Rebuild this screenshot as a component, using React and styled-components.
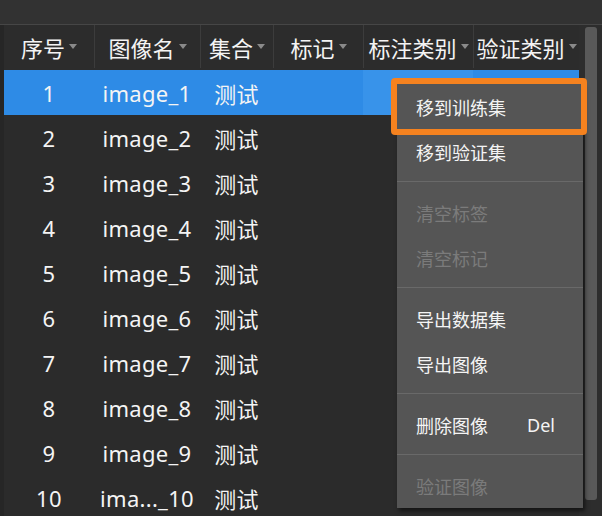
import React from "react";
import styled, { createGlobalStyle } from "styled-components";

const GlobalStyle = createGlobalStyle`
  html, body {
    margin: 0;
    padding: 0;
    background: #2b2b2b;
  }
  body {
    font-family: "Noto Sans", "Noto Sans CJK SC", sans-serif;
    color: #f2f2f2;
  }
`;

const Page = styled.div`
  width: 602px;
  height: 516px;
  display: flex;
  flex-direction: column;
  overflow: hidden;
  position: relative;
  background: #2b2b2b;
`;

const TopBar = styled.div`
  height: 24px;
  flex-shrink: 0;
  background: #323232;
  border-bottom: 1px solid #464646;
`;

const Main = styled.div`
  flex: 1;
  display: flex;
  min-height: 0;
`;

const LeftStrip = styled.div`
  width: 4px;
  flex-shrink: 0;
  background: #262626;
`;

const Table = styled.div`
  width: 575px;
  flex-shrink: 0;
  display: flex;
  flex-direction: column;
  overflow: hidden;
`;

const COLS = "90px 106px 73px 90px 110px 106px";

const HeaderRow = styled.div`
  display: grid;
  grid-template-columns: ${COLS};
  height: 45px;
  flex-shrink: 0;
  background: #2c2c2c;
`;

const HeaderCell = styled.div`
  display: flex;
  align-items: center;
  justify-content: center;
  gap: 4px;
  font-size: 22px;
  color: #f4f4f4;
  border-left: ${(p) => (p.$first ? "none" : "1px solid #3c3c3c")};
  margin-bottom: 2px;
`;

const SortArrow = styled.span`
  width: 0;
  height: 0;
  border-left: 4px solid transparent;
  border-right: 4px solid transparent;
  border-top: 5px solid #8a8a8a;
  margin-top: -1px;
`;

const Row = styled.div`
  display: grid;
  grid-template-columns: ${COLS};
  height: 45px;
  flex-shrink: 0;
  background: ${(p) => (p.$selected ? "#2e8be6" : "transparent")};
`;

const Cell = styled.div`
  display: flex;
  align-items: center;
  justify-content: center;
  font-size: 22px;
  letter-spacing: 0.3px;
  color: #f4f4f4;
  white-space: nowrap;
  background: ${(p) => (p.$current ? "#3893ea" : "transparent")};
`;

const ScrollArea = styled.div`
  flex: 1;
  background: #2d2d2d;
  padding: 2px 5px 0 6px;
`;

const ScrollThumb = styled.div`
  width: 12px;
  height: 473px;
  background: #595959;
  border-radius: 3px;
`;

const Menu = styled.div`
  position: absolute;
  left: 397px;
  top: 84px;
  width: 186px;
  background: #555555;
  box-shadow: 2px 3px 4px rgba(0, 0, 0, 0.55);
  display: flex;
  flex-direction: column;
`;

const MenuItem = styled.div`
  position: relative;
  height: 45px;
  display: flex;
  align-items: center;
  justify-content: space-between;
  padding: 0 28px 0 19px;
  font-size: 18px;
  color: ${(p) => (p.$disabled ? "#7b7b7b" : "#f4f4f4")};
`;

const Separator = styled.div`
  height: 1px;
  margin: 7px 0 8px;
  background: #696969;
`;

const Highlight = styled.div`
  position: absolute;
  left: -6px;
  right: -4px;
  top: -6px;
  bottom: -6px;
  border: 6px solid #f5821f;
  border-radius: 4px;
  pointer-events: none;
`;

const headers = ["序号", "图像名", "集合", "标记", "标注类别", "验证类别"];

const rows = Array.from({ length: 10 }, (_, i) => ({
  idx: i + 1,
  name: i === 9 ? "ima..._10" : `image_${i + 1}`,
  set: "测试",
}));

const menu = [
  { text: "移到训练集", highlight: true },
  { text: "移到验证集" },
  "sep",
  { text: "清空标签", disabled: true },
  { text: "清空标记", disabled: true },
  "sep",
  { text: "导出数据集" },
  { text: "导出图像" },
  "sep",
  { text: "删除图像", shortcut: "Del" },
  "sep",
  { text: "验证图像", disabled: true },
];

const App = () => {
  return (
    <Page>
      <GlobalStyle />
      <TopBar />
      <Main>
        <LeftStrip />
        <Table>
          <HeaderRow>
            {headers.map((h, i) => (
              <HeaderCell key={h} $first={i === 0}>
                {h}
                <SortArrow />
              </HeaderCell>
            ))}
          </HeaderRow>
          {rows.map((r) => (
            <Row key={r.idx} $selected={r.idx === 1}>
              <Cell>{r.idx}</Cell>
              <Cell>{r.name}</Cell>
              <Cell>{r.set}</Cell>
              <Cell />
              <Cell $current={r.idx === 1} />
              <Cell />
            </Row>
          ))}
        </Table>
        <ScrollArea>
          <ScrollThumb />
        </ScrollArea>
      </Main>

      <Menu>
        {menu.map((m, i) =>
          m === "sep" ? (
            <Separator key={i} />
          ) : (
            <MenuItem key={i} $disabled={m.disabled}>
              <span>{m.text}</span>
              {m.shortcut && <span>{m.shortcut}</span>}
              {m.highlight && <Highlight />}
            </MenuItem>
          )
        )}
      </Menu>
    </Page>
  );
};

export default App;
